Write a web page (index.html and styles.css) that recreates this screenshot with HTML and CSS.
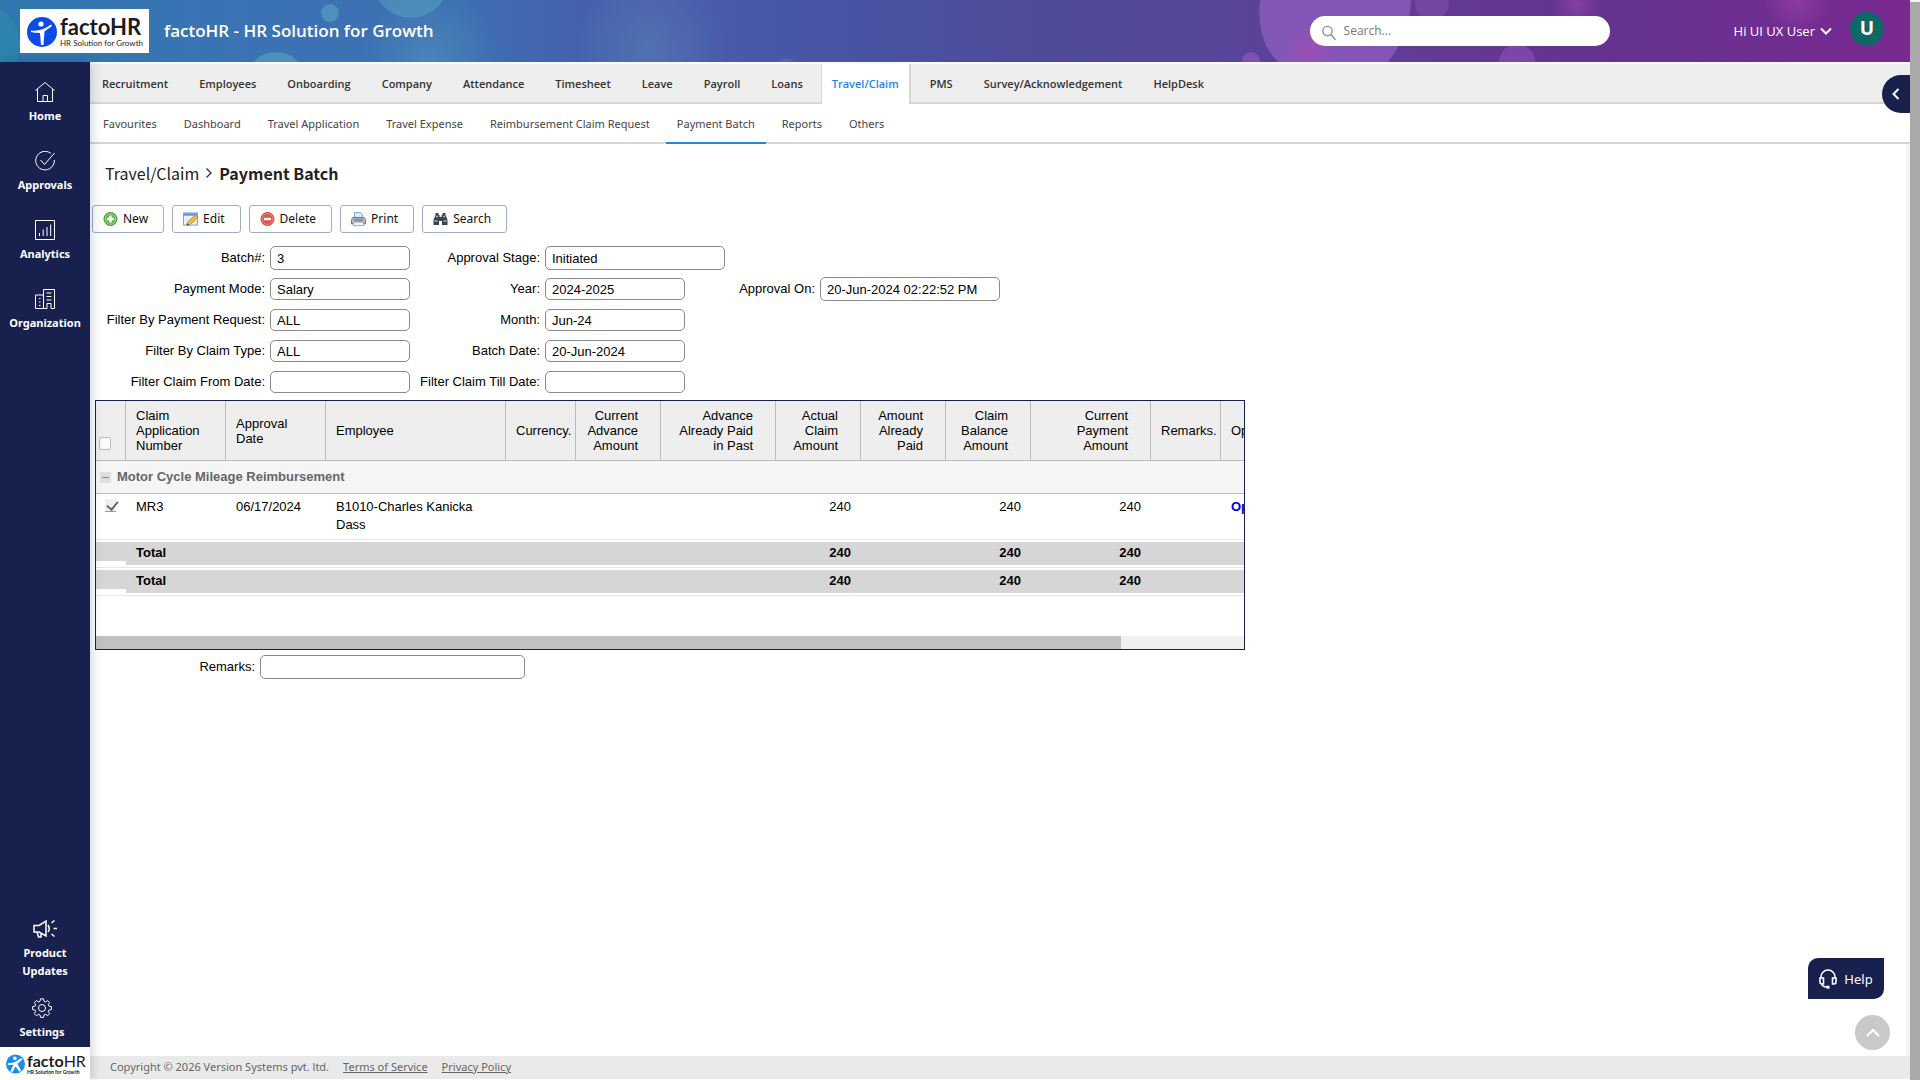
FILE: index.html
```html
<!DOCTYPE html>
<html lang="en">
<head>
<meta charset="utf-8">
<title>factoHR - Payment Batch</title>
<link rel="stylesheet" href="styles.css">
</head>
<body>
<header class="topbar">
  <svg class="bubbles" aria-hidden="true" width="100%" height="62">
    <defs>
      <radialGradient id="teal"><stop offset="0" stop-color="#5aa0bd" stop-opacity=".7"/><stop offset="1" stop-color="#5aa0bd" stop-opacity="0"/></radialGradient>
      <radialGradient id="pink"><stop offset="0" stop-color="#a94bb5" stop-opacity=".7"/><stop offset="1" stop-color="#a94bb5" stop-opacity="0"/></radialGradient>
    </defs>
    <circle cx="-22" cy="45" r="42" fill="#2f93b0" opacity=".45"/>
    <circle cx="330" cy="13" r="9" fill="#5aa5c0" opacity=".6"/>
    <circle cx="411" cy="-20" r="38" fill="#5aa5c0" opacity=".5"/>
    <circle cx="276" cy="82" r="30" fill="#5aa5c0" opacity=".6"/>
    <circle cx="430" cy="60" r="70" fill="url(#teal)" opacity=".6"/>
    <circle cx="650" cy="50" r="75" fill="url(#teal)" opacity=".4"/>
    <circle cx="787" cy="68" r="10" fill="#6a6cc0" opacity=".5"/>
    <path d="M1260 0Q1256 40 1278 62H1388Q1410 34 1411 0z" fill="#8f5dc0" opacity=".75"/>
    <circle cx="1310" cy="50" r="26" fill="url(#pink)"/>
    <circle cx="1251" cy="61" r="9" fill="#8a59b9" opacity=".7"/>
    <circle cx="1432" cy="3" r="17" fill="#8450b0" opacity=".55"/>
    <circle cx="1517" cy="62" r="18" fill="#8a4bb2" opacity=".7"/>
    <circle cx="1577" cy="5" r="24" fill="url(#pink)" opacity=".7"/>
    <circle cx="1797" cy="0" r="34" fill="url(#pink)" opacity=".7"/>
  </svg>
  <a class="brand" href="#">
    <svg width="30" height="30" viewBox="0 0 30 30" aria-hidden="true"><circle cx="15" cy="15" r="15" fill="#0b4be8"/><circle cx="14" cy="7" r="2.6" fill="#fff"/><path d="M4 13.5Q14 15 24 7.500L25 9 17.500 14.500 16.500 28 14 28 13 16Q7 16 4 15z" fill="#fff"/></svg>
    <span class="brand-text"><b>factoHR</b><small>HR Solution for Growth</small></span>
  </a>
  <h1 class="title">factoHR - HR Solution for Growth</h1>
  <form class="search" role="search">
    <svg width="14" height="16" viewBox="0 0 14 16" fill="none" stroke="#8a8a8a" stroke-width="1.3" aria-hidden="true"><circle cx="5.500" cy="6" r="4.700"/><path d="M9 9.500L13.500 15"/></svg>
    <input type="text" aria-label="Search" placeholder="Search...">
  </form>
  <button class="user" type="button">Hi UI UX User
    <svg width="12" height="8" viewBox="0 0 12 8" fill="none" stroke="#fff" stroke-width="2" aria-hidden="true"><path d="M1 1.500l5 5 5-5"/></svg>
  </button>
  <span class="avatar">U</span>
</header>

<div class="shell">
  <nav class="sidebar" aria-label="Main">
    <a href="#"><svg viewBox="0 0 20 20"><path d="M.5 8.500L10 .5l9.500 8M2.500 7v12.500h15V7M8 19.500v-6h4.500v6"/></svg>Home</a>
    <a href="#"><svg viewBox="0 0 20 20"><path d="M16 2.500A9.300 9.300 0 1 0 19.300 9M5.500 9l4 4.500L19.500 2"/></svg>Approvals</a>
    <a href="#"><svg viewBox="0 0 20 20"><path d="M.5.5h19v19H.5zM4.500 16v-3M8.200 16V9.500M12 16V7M15.700 16V4.500"/></svg>Analytics</a>
    <a href="#"><svg viewBox="0 0 20 20"><path d="M8.500 19.500H.5V6h8M8.500 19.500V.5h11v19H16v-5h-4v5zM11.500 4h5M11.500 7.500h5M11.500 11h5M4 9.500h1.500M4 13h1.500M4 16.500h1.500"/></svg>Organization</a>
    <div class="side-bottom">
      <a href="#"><svg viewBox="0 0 24 20"><path stroke-width="1.500" d="M1 6.500h5l7-4.500v15l-7-4H1zM4 13l1.500 5H8v-4.500M15 6q2.500 4 0 7M18.500 4L21.500 1.500M20.500 9.500H24M18.500 15l3 2.500"/></svg>Product<br>Updates</a>
      <a class="settings" href="#"><svg viewBox="0 0 20 20"><circle cx="10" cy="10" r="3.500"/><path d="M8.500.8h3l.5 2.500 1.600.7L15.700 2.500l2 2L16.300 6.600l.6 1.500 2.500.5v3l-2.500.5-.6 1.500 1.400 2.100-2 2-2.100-1.400-1.600.6-.5 2.500h-3l-.5-2.500-1.500-.6-2.200 1.400-2-2 1.400-2.100-.6-1.500-2.500-.5v-3l2.500-.5.6-1.500L2.300 4.500l2-2L6.500 4 8 3.300z"/></svg>Settings</a>
      <a class="side-logo" href="#"><svg viewBox="0 0 30 30"><circle cx="15" cy="15" r="15" fill="#1d8cf0"/><circle cx="14" cy="6" r="2.800" fill="#fff"/><path d="M3 14Q14 14 24 5.500L26 8 18 14.500 24 26 21 27 15 19 10 28 7 26 12 16Q6 17 3 16z" fill="#fff"/></svg><span class="brand-text"><b>facto<i>HR</i></b><small>HR Solution for Growth</small></span></a>
    </div>
  </nav>

  <div class="content">
    <nav class="tabs" aria-label="Modules">
      <a href="#">Recruitment</a><a href="#">Employees</a><a href="#">Onboarding</a><a href="#">Company</a><a href="#">Attendance</a><a href="#">Timesheet</a><a href="#">Leave</a><a href="#">Payroll</a><a href="#">Loans</a><a class="active" href="#">Travel/Claim</a><a href="#">PMS</a><a href="#">Survey/Acknowledgement</a><a href="#">HelpDesk</a>
    </nav>
    <nav class="subtabs" aria-label="Travel/Claim">
      <a href="#">Favourites</a><a href="#">Dashboard</a><a href="#">Travel Application</a><a href="#">Travel Expense</a><a href="#">Reimbursement Claim Request</a><a class="active" href="#">Payment Batch</a><a href="#">Reports</a><a href="#">Others</a>
    </nav>
    <main>
      <h2 class="crumbs"><span>Travel/Claim</span><svg width="8" height="12" viewBox="0 0 8 12" fill="none" stroke="#333" stroke-width="1.300" aria-hidden="true"><path d="M1.500 1.500l4.500 4.500-4.500 4.500"/></svg><b>Payment Batch</b></h2>
      <div class="toolbar">
        <button type="button"><svg width="15" height="16" viewBox="0 0 15 16"><circle cx="7.500" cy="8" r="6.500" fill="#5cb04c" stroke="#3f8f3a"/><circle cx="7.500" cy="8" r="5.200" fill="none" stroke="#a5dc90"/><path d="M7.500 4.500v7M4 8h7" stroke="#fff" stroke-width="2.400"/></svg>New</button>
        <button type="button"><svg width="15" height="16" viewBox="0 0 16 16"><path d="M.5 1.500h15v13H.5z" fill="#eaf3fc" stroke="#6f9bd0"/><path d="M1 2h14v2.500H1z" fill="#5b94dc"/><path d="M4 15l1-4 8-7 3 2.500-8 7z" fill="#f5b94a" stroke="#b9792b" stroke-width=".8"/><path d="M4 15l.6-2.400 1.700 1.600z" fill="#444"/></svg>Edit</button>
        <button type="button"><svg width="15" height="16" viewBox="0 0 15 16"><circle cx="7.500" cy="8" r="6.500" fill="#e0564a" stroke="#c4392f"/><circle cx="7.500" cy="8" r="5.500" fill="none" stroke="#f08c80"/><path d="M4 8h7" stroke="#fff" stroke-width="2.400"/></svg>Delete</button>
        <button type="button"><svg width="15" height="16" viewBox="0 0 17 16"><path d="M4 7V.6h6.500L13 3v4z" fill="#d9ebfb" stroke="#6c9bce"/><path d="M2 6.500h13L16.500 9v4.500H.5V9z" fill="#b9bcc4" stroke="#5d6069"/><path d="M3.500 8h10v3h-10z" fill="#8c9099"/><path d="M3 11.500h11l.5 4h-12z" fill="#eef6fe" stroke="#7aa5d4"/></svg>Print</button>
        <button type="button"><svg width="15" height="14" viewBox="0 0 15 14"><path d="M2.500 1h3v2h1V5h2V3h1V1h3v2L14.500 8v5H9V9H6v4H.5V8L2.500 3z" fill="#3c4350"/><path d="M1.500 9h3M10.500 9h3M3 4.500h2M10 4.500h2" stroke="#aeb6c2" stroke-width="1.300"/></svg>Search</button>
      </div>

      <form class="fields">
        <label for="batch">Batch#:</label><input class="tall" id="batch" value="3">
        <label for="stage">Approval Stage:</label><input class="tall wide" id="stage" value="Initiated">
        <span class="blank"></span>
        <label for="mode">Payment Mode:</label><input id="mode" value="Salary">
        <label for="year">Year:</label><input id="year" value="2024-2025">
        <label for="appr">Approval On:</label><input class="tall wide" id="appr" value="20-Jun-2024 02:22:52 PM">
        <label for="req">Filter By Payment Request:</label><input id="req" value="ALL">
        <label for="month">Month:</label><input id="month" value="Jun-24">
        <span class="blank"></span>
        <label for="ctype">Filter By Claim Type:</label><input id="ctype" value="ALL">
        <label for="bdate">Batch Date:</label><input id="bdate" value="20-Jun-2024">
        <span class="blank"></span>
        <label for="from">Filter Claim From Date:</label><input id="from">
        <label for="till">Filter Claim Till Date:</label><input id="till">
        <span class="blank"></span>
      </form>

      <div class="grid">
        <table>
          <colgroup><col class="c30"><col class="c100"><col class="c100"><col class="c180"><col class="c70"><col class="c85"><col class="c115"><col class="c85"><col class="c85"><col class="c85"><col class="c120"><col class="c70"><col class="c160"></colgroup>
          <thead>
            <tr><th class="pick"><input type="checkbox" aria-label="Select all"></th><th>Claim Application Number</th><th>Approval Date</th><th>Employee</th><th class="tight">Currency.</th><th class="num">Current Advance Amount</th><th class="num">Advance Already Paid in Past</th><th class="num">Actual Claim Amount</th><th class="num">Amount Already Paid</th><th class="num">Claim Balance Amount</th><th class="num">Current Payment Amount</th><th class="tight">Remarks.</th><th>Open</th></tr>
          </thead>
          <tbody>
            <tr class="group"><td colspan="13"><div><button type="button" aria-label="Collapse group"></button>Motor Cycle Mileage Reimbursement</div></td></tr>
            <tr class="row"><td class="pick"><input type="checkbox" aria-label="Select MR3" checked></td><td>MR3</td><td>06/17/2024</td><td>B1010-Charles Kanicka Dass</td><td></td><td></td><td></td><td class="num">240</td><td></td><td class="num">240</td><td class="num">240</td><td></td><td><a href="#">Open</a></td></tr>
            <tr class="total"><td><div class="short"></div></td><td><div>Total</div></td><td><div></div></td><td><div></div></td><td><div></div></td><td><div></div></td><td><div></div></td><td><div class="num">240</div></td><td><div></div></td><td><div class="num">240</div></td><td><div class="num">240</div></td><td><div></div></td><td><div></div></td></tr>
            <tr class="total"><td><div class="short"></div></td><td><div>Total</div></td><td><div></div></td><td><div></div></td><td><div></div></td><td><div></div></td><td><div></div></td><td><div class="num">240</div></td><td><div></div></td><td><div class="num">240</div></td><td><div class="num">240</div></td><td><div></div></td><td><div></div></td></tr>
          </tbody>
        </table>
        <div class="hscroll"><div></div></div>
      </div>
      <div class="remarks"><label for="remarks">Remarks:</label><input id="remarks"></div>
    </main>
    <footer><span>Copyright © 2026 Version Systems pvt. ltd.</span><a href="#">Terms of Service</a><a href="#">Privacy Policy</a></footer>
  </div>
</div>

<div class="vscroll"></div>
<button class="drawer" type="button" aria-label="Open panel"><svg width="8" height="12" viewBox="0 0 8 12" fill="none" stroke="#fff" stroke-width="2"><path d="M6.500 1L1.500 6l5 5"/></svg></button>
<button class="help" type="button"><svg width="18" height="20" viewBox="0 0 18 20" fill="none" stroke="#fff" stroke-width="1.600" aria-hidden="true"><path d="M2 9V8a7 7 0 0 1 14 0v1M1 9h3.500v6H3a2 2 0 0 1-2-2zM17 9h-3.500v6H15a2 2 0 0 0 2-2zM3 15q0 3 5 3"/><path d="M7.500 18.200h3" stroke-width="3"/></svg>Help</button>
<button class="totop" type="button" aria-label="Back to top"><svg width="14" height="9" viewBox="0 0 14 9" fill="none" stroke="#fff" stroke-width="2"><path d="M1 8l6-6 6 6"/></svg></button>
</body>
</html>
```
FILE: styles.css
```css
* { box-sizing: border-box; }
body {
  margin: 0;
  min-height: 100vh;
  display: flex;
  flex-direction: column;
  padding-right: 10px;
  font-family: "Noto Sans", "Open Sans", sans-serif;
  font-size: 12px;
  color: #222;
  background: #fff;
}
a { color: inherit; text-decoration: none; }
button { font: inherit; color: inherit; border: 0; padding: 0; background: none; }

.topbar {
  position: relative;
  display: flex;
  align-items: center;
  height: 62px;
  padding: 0 26px 0 20px;
  color: #fff;
  background: linear-gradient(90deg, #2f78ae 0, #3b73b5 12%, #3d6fb3 24%, #4462ad 30%, #4d5fae 34%, #4755a5 42%, #4f4b9a 55%, #58459a 64%, #613d98 72%, #63338f 84%, #7a2992 100%);
}
.bubbles { position: absolute; inset: 0; overflow: hidden; }
.topbar > :not(.bubbles) { position: relative; }
.brand {
  display: flex;
  align-items: center;
  gap: 3px;
  width: 129px;
  height: 44px;
  padding: 2px 0 0 7px;
  background: #fff;
  color: #1c1c1c;
}
.brand-text { display: flex; flex-direction: column; font-family: Lato, sans-serif; white-space: nowrap; }
.brand-text b { font-size: 22px; line-height: 22px; font-weight: 700; }
.brand-text small { font-size: 8px; line-height: 10px; }
.title { margin: 0 0 0 15px; font: 600 17px/24px "Open Sans", sans-serif; }
.search {
  display: flex;
  align-items: center;
  gap: 8px;
  width: 300px;
  height: 30px;
  margin-left: auto;
  padding: 0 12px;
  border-radius: 15px;
  background: #fff;
}
.search svg { margin-top: 4px; }
.search input { border: 0; outline: 0; flex: 1; font: 12px/20px "Open Sans", sans-serif; padding: 0; }
.search input::placeholder { color: #777; }
.user { display: flex; align-items: center; gap: 5px; margin: 0 18px 0 124px; font: 13px/20px "Open Sans", sans-serif; }
.avatar {
  width: 34px;
  height: 34px;
  margin-top: -4px;
  border-radius: 50%;
  background: #0f6766;
  font: 700 19px/33px "Open Sans", sans-serif;
  text-align: center;
}

.shell { flex: 1; display: flex; }
.sidebar {
  display: flex;
  flex-direction: column;
  width: 90px;
  padding-top: 20px;
  background: #18214d;
  color: #fff;
  font: 700 11px/18px "Noto Sans", sans-serif;
  text-align: center;
  box-shadow: 0 0 12px rgba(24, 33, 77, .25);
  z-index: 1;
}
.sidebar a { display: flex; flex-direction: column; align-items: center; gap: 5px; min-height: 69px; }
.sidebar svg { width: 20px; height: 20px; fill: none; stroke: #fff; stroke-width: 1; }
.side-bottom { margin-top: auto; }
.side-bottom a { min-height: 79px; }
.side-bottom a:first-child svg { width: 24px; }
.sidebar .settings { min-height: 49px; padding-right: 6px; }
.sidebar .side-logo { flex-direction: row; gap: 2px; height: 33px; min-height: 33px; padding: 0 6px; background: #fff; color: #1c1c1c; text-align: left; }
.side-logo svg { width: 19px; height: 22px; stroke: none; flex: none; }
.side-logo .brand-text b { font-size: 16px; line-height: 17px; }
.side-logo i { font-style: normal; font-weight: 400; }
.side-logo .brand-text small { font-size: 5px; line-height: 6px; }

.content { flex: 1; min-width: 0; display: flex; flex-direction: column; border-top: 2px solid #fbfaff; }
.tabs {
  display: flex;
  gap: 1px;
  height: 40px;
  border-bottom: 2px solid #d6d6d6;
  background: #eee;
  color: #333;
  font: 600 11px/40px "Open Sans", sans-serif;
}
.tabs a { height: 38px; padding: 0 15px; }
.tabs a:first-child { padding-left: 12px; }
.tabs .active { height: 40px; margin: 0 3px 0 2px; padding: 0 10px; background: #fff; color: #1e88e0; border: solid #d6d6d6; border-width: 0 2px 0 1px; }
.subtabs {
  display: flex;
  gap: 5px;
  height: 40px;
  padding-left: 2px;
  border-bottom: 2px solid #d6d6d6;
  color: #444;
  font-size: 11px;
  line-height: 40px;
}
.subtabs a { height: 40px; padding: 0 11px; }
.subtabs .active { border-bottom: 2px solid #1e8be0; }

main { flex: 1; padding: 15px 0 0; border-right: 4px solid #f3f3f3; }
.crumbs {
  display: flex;
  align-items: center;
  gap: 6px;
  margin: 0 0 18px 15px;
  font: 400 16px/28px "Noto Sans CJK JP", sans-serif;
}
.toolbar { display: flex; gap: 8px; margin-left: 2px; }
.toolbar button {
  display: flex;
  align-items: center;
  gap: 5px;
  height: 28px;
  padding: 0 15px 0 10px;
  border: 1px solid #9facc8;
  border-radius: 3px;
  background: #fff;
  color: #111;
  font: 12px/20px "Noto Sans", sans-serif;
}

.fields, .remarks, .grid { font: 13px/18px "Liberation Sans", Arial, sans-serif; color: #000; }
.fields {
  display: grid;
  grid-template-columns: repeat(3, 170px 105px);
  grid-auto-rows: 31px;
  align-items: center;
  margin: 9px 0 0 5px;
}
.fields label, .remarks label { text-align: right; }
.fields input, .remarks input {
  width: 140px;
  height: 22px;
  margin-left: 5px;
  padding: 1px 6px 0;
  border: 1px solid #8a8a8a;
  border-radius: 5px;
  font: inherit;
  color: inherit;
  background: #fff;
}
.fields .tall { height: 24px; }
.fields .wide { width: 180px; }
.fields .blank { grid-column: span 2; }

.grid { max-width: 1150px; margin: 3px 0 0 5px; border: 1px solid #18214d; overflow: hidden; }
table { width: 1284px; table-layout: fixed; border-spacing: 0; margin-bottom: 40px; }
.c30 { width: 30px; } .c70 { width: 70px; } .c85 { width: 85px; } .c100 { width: 100px; }
.c115 { width: 115px; } .c120 { width: 120px; } .c160 { width: 160px; } .c180 { width: 180px; }
th {
  height: 60px;
  padding: 0 10px;
  border: solid #bbb;
  border-width: 0 1px 1px 0;
  background: #eee;
  font-weight: 400;
  line-height: 15px;
  text-align: left;
}
th.num { padding: 0 22px 0 5px; text-align: right; }
th.tight { padding-right: 0; }
th.pick { padding: 0 0 10px 3px; vertical-align: bottom; }
td { padding: 0; }
.pick input { appearance: none; display: block; width: 12px; height: 13px; margin: 0; border: 1px solid #bbb; border-radius: 2px; background: #fafafa; }
.group td { height: 33px; background: #f5f5f5; border-bottom: 1px solid #bbb; }
.group div { display: flex; align-items: center; gap: 6px; padding-left: 4px; color: #666; font-weight: 700; }
.group button { width: 11px; height: 11px; background: linear-gradient(#888, #888) center / 7px 1px no-repeat #dedfe3; }
.row td { height: 46px; padding: 4px 10px; vertical-align: top; border-bottom: 1px solid #e6e6e6; }
.row td.pick { padding: 5px 0 0 9px; }
.row .pick input { border: 0; border-bottom: 1px solid #999; border-radius: 0; width: 11px; background: #f1f1f1; }
.row .pick input::before { content: ""; display: block; width: 5px; height: 9px; margin-left: 4px; border: solid #666; border-width: 0 2px 2px 0; transform: rotate(40deg); }
.row a { color: #00d; font-weight: 700; }
.total td { height: 28px; padding: 2px 0; vertical-align: top; border-bottom: 1px solid #e6e6e6; }
.total div { height: 23px; padding: 0 10px; line-height: 21px; background: #d6d6d6; font-weight: 700; }
.total .short { height: 19px; }
.num { text-align: right; }
.hscroll { height: 13px; background: #f0f0f0; }
.hscroll div { width: 89.3%; height: 13px; background: #c1c1c1; }
.remarks { display: grid; grid-template-columns: 165px auto; align-items: center; margin: 5px 0 0; }
.remarks input { width: 265px; height: 24px; }

footer { display: flex; gap: 14px; height: 24px; padding-left: 20px; background: #eaeaea; border-bottom: 1px solid #fff; color: #666; font-size: 11px; line-height: 21px; }
footer a { text-decoration: underline; }

.vscroll { position: fixed; top: 0; right: 0; bottom: 0; width: 10px; background: #a9a9a9; border-top: 2px solid #f3f3f3; }
.drawer { position: fixed; z-index: 2; top: 75px; right: 10px; width: 28px; height: 38px; border-radius: 19px 0 0 19px; background: #18214d; }
.help {
  position: fixed;
  right: 36px;
  bottom: 81px;
  display: flex;
  align-items: center;
  justify-content: center;
  gap: 7px;
  width: 76px;
  height: 41px;
  border-radius: 10px 0;
  background: #18214d;
  color: #fff;
  font-size: 13px;
}
.totop { position: fixed; right: 30px; bottom: 30px; width: 35px; height: 35px; border-radius: 50%; background: #c9c9c9; }
.totop svg, .drawer svg { display: block; margin: auto; }
```
